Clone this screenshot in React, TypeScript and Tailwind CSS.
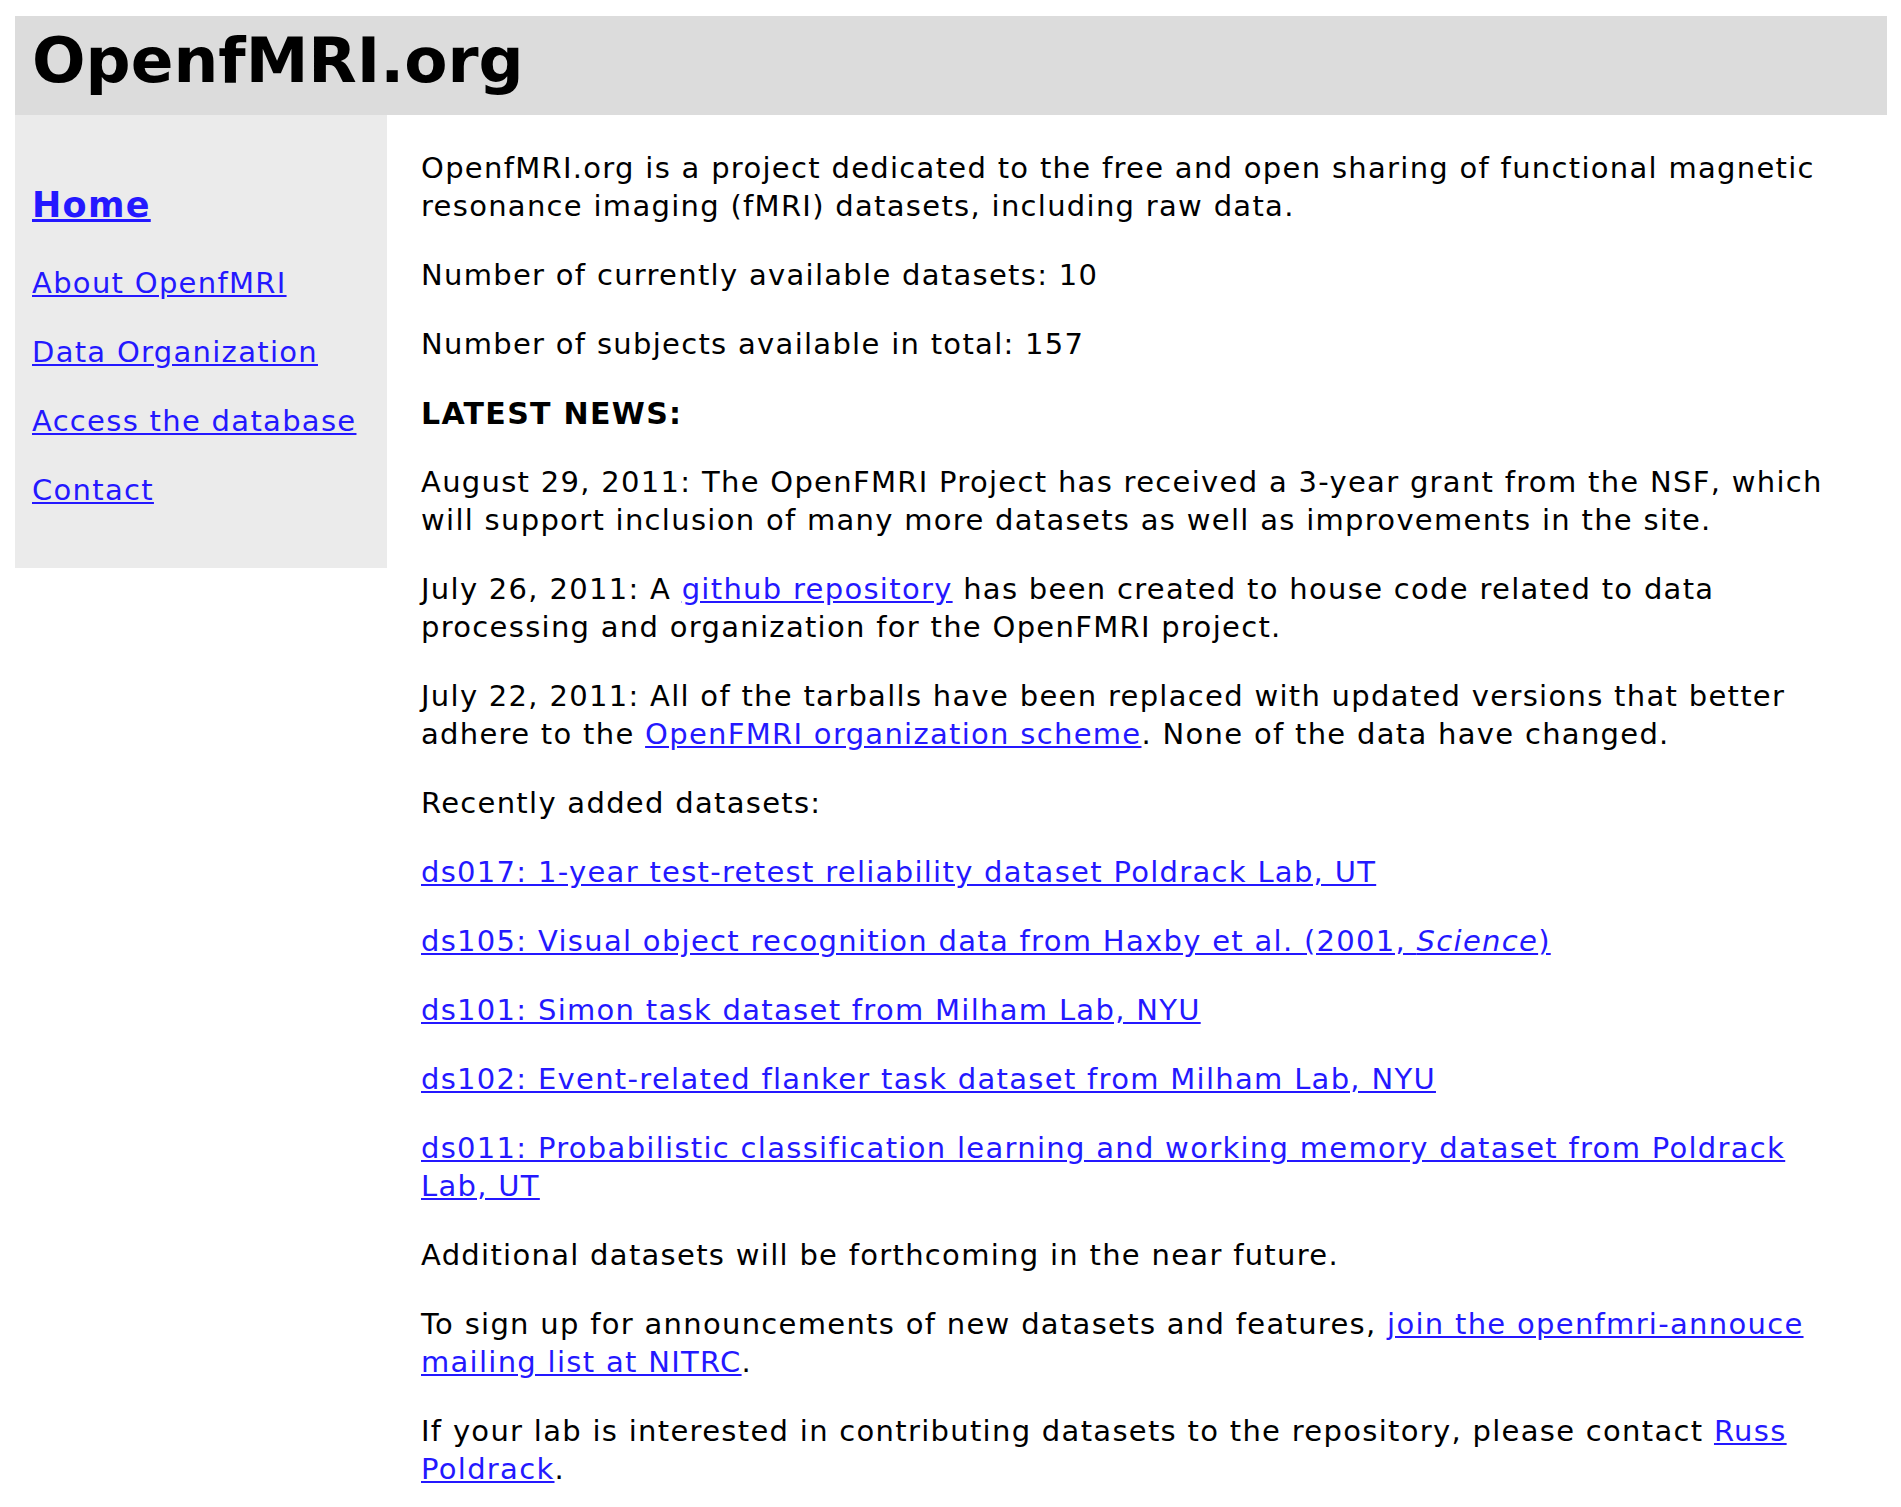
import React from "react";

const navLinks = ["About OpenfMRI", "Data Organization", "Access the database", "Contact"];

const datasets = [
  "ds017: 1-year test-retest reliability dataset Poldrack Lab, UT",
  "ds105",
  "ds101: Simon task dataset from Milham Lab, NYU",
  "ds102: Event-related flanker task dataset from Milham Lab, NYU",
  "ds011: Probabilistic classification learning and working memory dataset from Poldrack Lab, UT",
];

function A({ children }: { children: React.ReactNode }) {
  return (
    <a href="#" className="text-[#2418ff] underline">
      {children}
    </a>
  );
}

export default function App() {
  return (
    <div className="min-h-screen bg-white pt-[16px] pl-[15px] pr-[14px] font-['DejaVu_Sans',Verdana,sans-serif] text-black">
      <header className="h-[99px] bg-[#dcdcdc] pl-[17px] pt-[13px]">
        <h1 className="text-[63px] leading-[64px] font-bold">OpenfMRI.org</h1>
      </header>

      <div className="flex items-start tracking-[1.3px]">
        <nav className="w-[372px] shrink-0 bg-[#ebebeb] pl-[17px] pt-[68px] pb-[28px]">
          <h2 className="text-[35px] leading-[44px] font-bold mb-[37px]">
            <A>Home</A>
          </h2>
          {navLinks.map((l) => (
            <p key={l} className="text-[29px] leading-[38px] mb-[31px]">
              <A>{l}</A>
            </p>
          ))}
        </nav>

        <main className="flex-1 pl-[34px] pr-[34px] pt-[34px] text-[29px] leading-[38px] [&>p]:mb-[31px]">
          <p>
            OpenfMRI.org is a project dedicated to the free and open sharing of functional magnetic
            resonance imaging (fMRI) datasets, including raw data.
          </p>
          <p>Number of currently available datasets: 10</p>
          <p>Number of subjects available in total: 157</p>
          <h3 className="text-[30px] leading-[40px] font-bold mb-[29px]">LATEST NEWS:</h3>
          <p>
            August 29, 2011: The OpenFMRI Project has received a 3-year grant from the NSF, which
            will support inclusion of many more datasets as well as improvements in the site.
          </p>
          <p>
            July 26, 2011: A <A>github repository</A> has been created to house code related to
            data processing and organization for the OpenFMRI project.
          </p>
          <p>
            July 22, 2011: All of the tarballs have been replaced with updated versions that better
            adhere to the <A>OpenFMRI organization scheme</A>. None of the data have changed.
          </p>
          <p>Recently added datasets:</p>
          {datasets.map((d) =>
            d === "ds105" ? (
              <p key={d}>
                <A>
                  ds105: Visual object recognition data from Haxby et al. (2001, <i>Science</i>)
                </A>
              </p>
            ) : (
              <p key={d}>
                <A>{d}</A>
              </p>
            )
          )}
          <p>Additional datasets will be forthcoming in the near future.</p>
          <p>
            To sign up for announcements of new datasets and features,{" "}
            <A>join the openfmri-annouce mailing list at NITRC</A>.
          </p>
          <p>
            If your lab is interested in contributing datasets to the repository, please contact{" "}
            <A>Russ Poldrack</A>.
          </p>
        </main>
      </div>
    </div>
  );
}
